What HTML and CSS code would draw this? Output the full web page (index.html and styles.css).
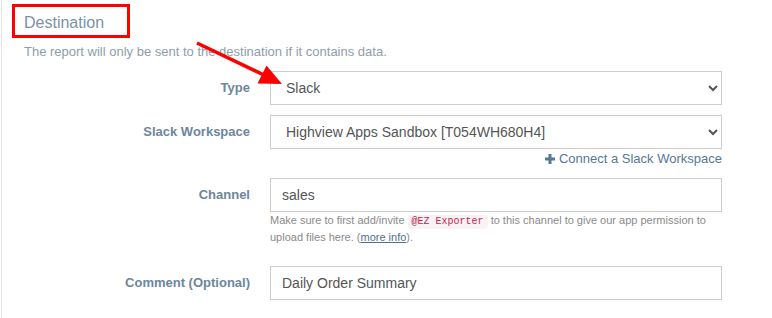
FILE: index.html
```html
<!DOCTYPE html>
<html>

<head>
    <meta charset="UTF-8">
    <title>Destination</title>
    <link rel="stylesheet" href="styles.css">
</head>

<body>
    <div class="panel">
        <h3 class="section-title">Destination</h3>
        <p class="section-desc">The report will only be sent to the destination if it contains data.</p>

        <form class="form">
            <div class="form-row">
                <label class="form-label" for="type">Type</label>
                <div class="form-control-wrap">
                    <select id="type" class="form-control">
                        <option>Slack</option>
                        <option>Email</option>
                    </select>
                </div>
            </div>

            <div class="form-row">
                <label class="form-label" for="workspace">Slack Workspace</label>
                <div class="form-control-wrap">
                    <select id="workspace" class="form-control">
                        <option>Highview Apps Sandbox [T054WH680H4]</option>
                    </select>
                    <div class="connect-line">
                        <a href="#" class="connect-link">
                            <svg class="plus-icon" width="10" height="10" viewBox="0 0 10 10">
                                <path d="M3.5 0h3v3.5H10v3H6.5V10h-3V6.5H0v-3h3.5z" fill="currentColor" />
                            </svg>
                            Connect a Slack Workspace
                        </a>
                    </div>
                </div>
            </div>

            <div class="form-row">
                <label class="form-label" for="channel">Channel</label>
                <div class="form-control-wrap">
                    <input type="text" id="channel" class="form-control" value="sales">
                    <p class="help-text">Make sure to first add/invite <code>@EZ Exporter</code> to this channel to give our app permission to upload files here. (<a href="#">more info</a>).</p>
                </div>
            </div>

            <div class="form-row">
                <label class="form-label" for="comment">Comment (Optional)</label>
                <div class="form-control-wrap">
                    <input type="text" id="comment" class="form-control" value="Daily Order Summary">
                </div>
            </div>
        </form>

        <!-- annotation overlay -->
        <div class="highlight-box"></div>
        <svg class="annotation-arrow" width="772" height="318" viewBox="0 0 772 318">
            <line x1="197" y1="43" x2="266" y2="76" stroke="#f00" stroke-width="3.5" />
            <polygon points="282,84 257.5,83.5 266.5,65.5" fill="#f00" />
        </svg>
    </div>
</body>

</html>
```

FILE: styles.css
```css
/* Reset styles */
* {
    margin: 0;
    padding: 0;
    box-sizing: border-box;
}

body {
    font-family: "Liberation Sans", Arial, sans-serif;
    background-color: #fff;
}

.panel {
    position: relative;
    margin-left: 1px;
    border-left: 1px solid #e6e6e6;
    height: 318px;
    padding-top: 13px;
}

.section-title {
    margin-left: 22px;
    font-size: 16px;
    font-weight: normal;
    line-height: 19px;
    color: #7c91a5;
}

.section-desc {
    margin: 11px 0 0 22px;
    font-size: 13px;
    line-height: 18px;
    color: #8e9dac;
}

.form {
    margin-top: 10px;
}

.form-row {
    display: grid;
    grid-template-columns: 248px 452px;
    column-gap: 20px;
    margin-bottom: 10px;
}

.form-label {
    text-align: right;
    font-size: 13px;
    font-weight: bold;
    line-height: 34px;
    color: #6d869c;
}

.form-control {
    display: block;
    width: 100%;
    height: 34px;
    padding: 6px 11px;
    font-family: "Liberation Sans", Arial, sans-serif;
    font-size: 14px;
    color: #555;
    background-color: #fff;
    border: 1px solid #ccc;
    border-radius: 0;
}

.connect-line {
    text-align: right;
    line-height: 18px;
}

.connect-link {
    font-size: 13px;
    color: #55789a;
    text-decoration: none;
}

.plus-icon {
    vertical-align: -0.5px;
}

.help-text {
    font-size: 11px;
    line-height: 17px;
    color: #8a8a8a;
    margin-bottom: 10px;
}

.help-text a {
    color: #4f6f8f;
}

code {
    display: inline-block;
    font-family: "Liberation Mono", monospace;
    font-size: 10px;
    line-height: 14px;
    padding: 0 4px;
    color: #c7254e;
    background-color: #f9f2f4;
    border-radius: 3px;
}

.highlight-box {
    position: absolute;
    left: 10px;
    top: 4px;
    width: 118px;
    height: 34px;
    border: 3px solid #f00;
}

.annotation-arrow {
    position: absolute;
    left: -2px;
    top: 0;
    pointer-events: none;
}
```
